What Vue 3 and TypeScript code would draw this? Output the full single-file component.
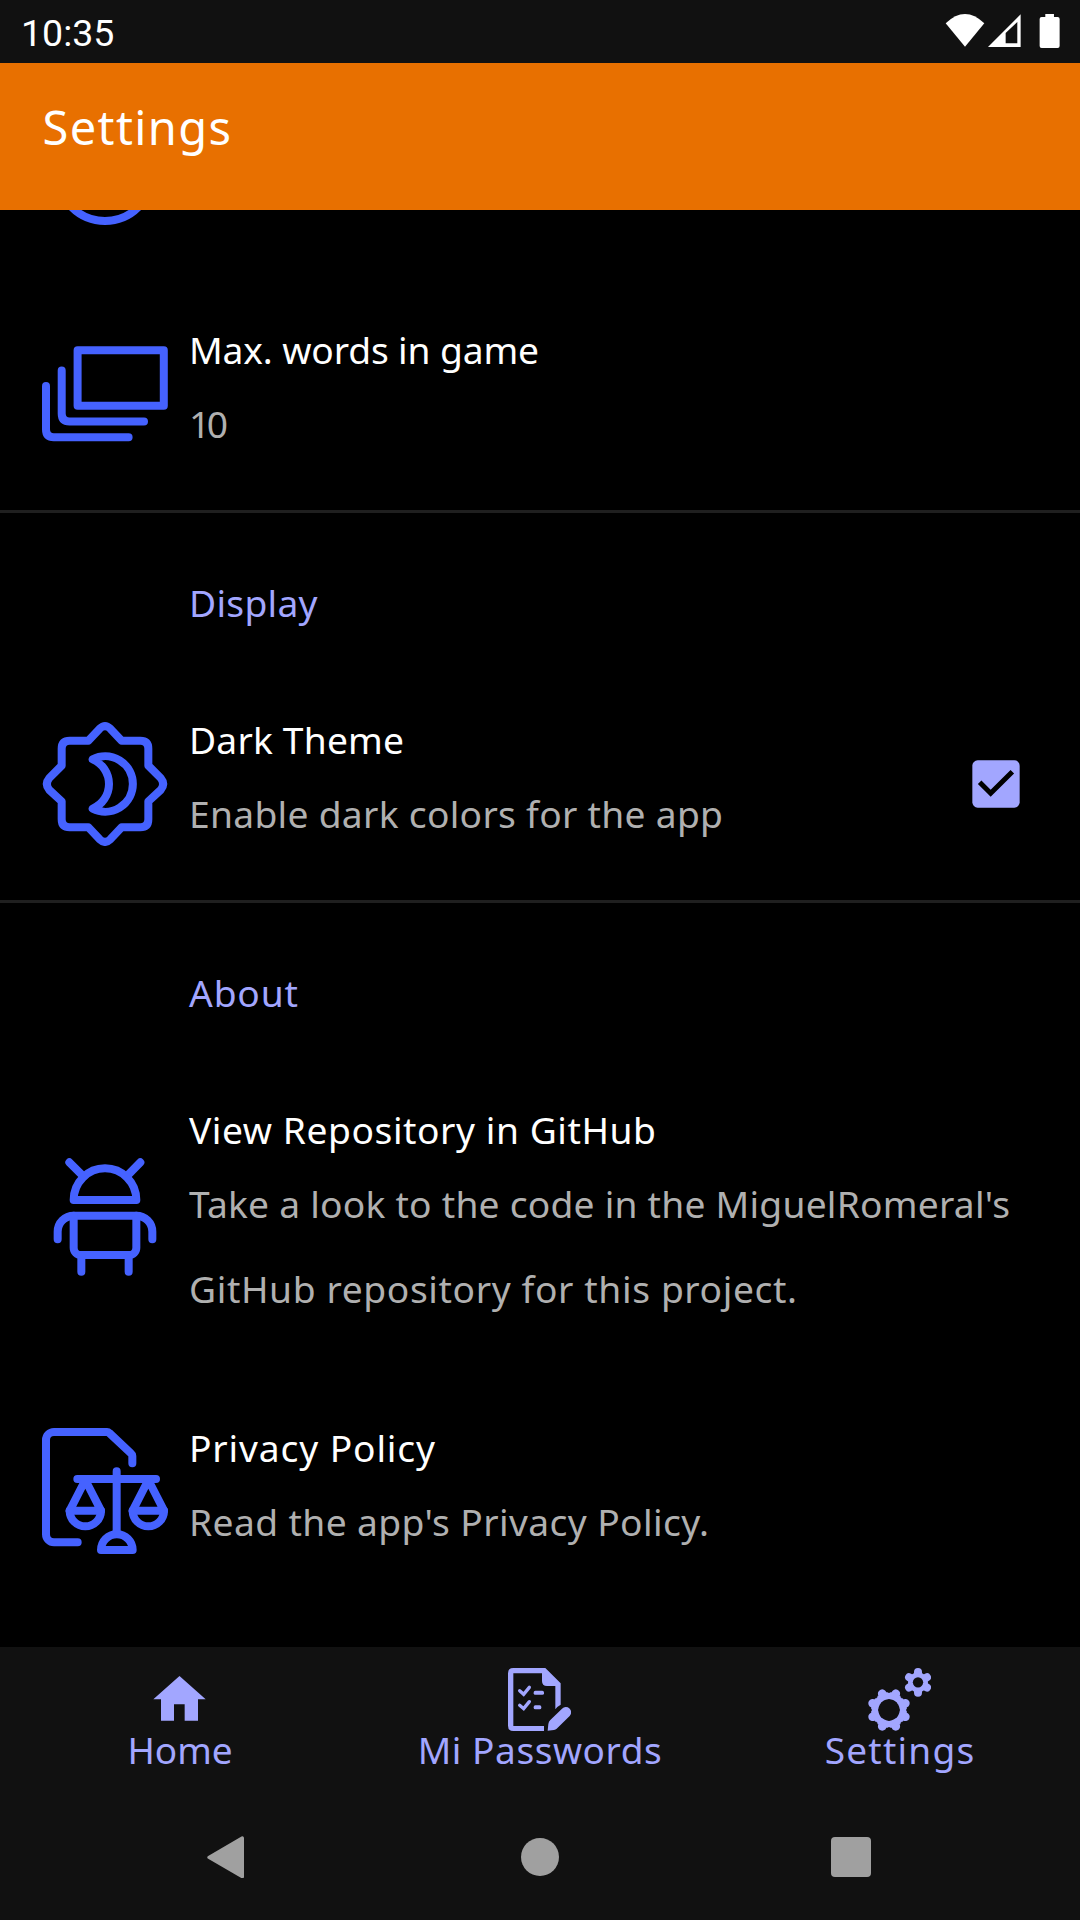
<script setup lang="ts">
interface Label {
  text: string
  width: number
}

const FAMILY = '"Noto Sans", "Open Sans", sans-serif'
const pen = document.createElement('canvas').getContext('2d')!

// Tracking that makes a label span the given width.
function track(label: Label, size = 37.2) {
  pen.font = `${size}px ${FAMILY}`
  const natural = pen.measureText(label.text).width
  const spacing = (label.width - natural) / (label.text.length - 1)
  return { letterSpacing: `${spacing.toFixed(3)}px` }
}

const appTitle: Label = { text: 'Settings', width: 188.5 }
const display: Label = { text: 'Display', width: 128.5 }
const about: Label = { text: 'About', width: 109 }

const words = {
  title: { text: 'Max. words in game', width: 350 },
  lines: [{ text: '10', width: 39 }],
}
const theme = {
  title: { text: 'Dark Theme', width: 215 },
  lines: [{ text: 'Enable dark colors for the app', width: 534 }],
}
const repository = {
  title: { text: 'View Repository in GitHub', width: 467 },
  lines: [
    { text: "Take a look to the code in the MiguelRomeral's", width: 821 },
    { text: 'GitHub repository for this project.', width: 608 },
  ],
}
const privacy = {
  title: { text: 'Privacy Policy', width: 246 },
  lines: [{ text: "Read the app's Privacy Policy.", width: 520 }],
}

const tabHome: Label = { text: 'Home', width: 105 }
const tabPasswords: Label = { text: 'Mi Passwords', width: 244 }
const tabSettings: Label = { text: 'Settings', width: 149.5 }

function teeth(cx: number, cy: number, count: number, from: number, to: number, start: number) {
  return Array.from({ length: count }, (_, i) => {
    const a = ((start + (360 / count) * i) * Math.PI) / 180
    const at = (r: number) => `${(cx + r * Math.cos(a)).toFixed(2)} ${(cy + r * Math.sin(a)).toFixed(2)}`
    return `M${at(from)}L${at(to)}`
  }).join('')
}
const bigTeeth = teeth(327, 210, 8, 40, 53, 22.5)
const bigTeethBase = teeth(327, 210, 8, 40, 52, 22.5)
const smallTeeth = teeth(414, 127, 6, 22, 31, 30)
</script>

<template>
  <div class="screen">
    <div class="status">
      <span class="clock">10:35</span>
      <svg class="status-icons" viewBox="130 36 352 114">
        <path d="M135 70Q193 14 251 70L193 140Z" />
        <path fill-rule="evenodd" d="M262 141L360 43V141ZM315 99V130H350V66Z" />
        <path d="M434 42H460V51H471Q477 51 477 57V138Q477 144 471 144H423Q417 144 417 138V57Q417 51 423 51H434Z" />
      </svg>
    </div>

    <header class="app-bar">
      <h1 :style="track(appTitle, 47)">{{ appTitle.text }}</h1>
    </header>

    <main class="list">
      <div class="row row-clipped">
        <svg class="icon" viewBox="42 111 126 126"><circle cx="105" cy="174" r="47" /></svg>
      </div>

      <section class="row">
        <svg class="icon" viewBox="42 330 126 126">
          <path d="M77.6 350.3H163.8V405.7H77.6Z" />
          <path d="M61.7 370.5V413.5Q61.7 421.5 69.5 421.5H144" />
          <path d="M46 386V429.3Q46 437.3 53.8 437.3H128.6" />
        </svg>
        <div class="copy">
          <h2 :style="track(words.title)">{{ words.title.text }}</h2>
          <p v-for="l in words.lines" :key="l.text" :style="track(l)">{{ l.text }}</p>
        </div>
      </section>

      <h3 class="category"><span :style="track(display)">{{ display.text }}</span></h3>

      <section class="row">
        <svg class="icon icon-fine" viewBox="66 60 378 378">
          <path d="M205 122L239 86Q255 71 271 86L305 122H361Q385 122 385 146V197L422 234Q437 252 422 270L385 304V358Q385 382 361 382H305L271 418Q255 433 239 418L205 382H149Q125 382 125 358V304L88 270Q73 252 88 234L125 197V146Q125 122 149 122Z" />
          <path d="M218 178A83 83 0 1 1 218 326A80.4 80.4 0 0 0 218 178Z" />
        </svg>
        <div class="copy">
          <h2 :style="track(theme.title)">{{ theme.title.text }}</h2>
          <p v-for="l in theme.lines" :key="l.text" :style="track(l)">{{ l.text }}</p>
        </div>
        <svg class="checkbox" viewBox="96 90 144 144">
          <rect x="97" y="91" width="142" height="142" rx="16" />
          <path d="M119 157L152 190L217 125" />
        </svg>
      </section>

      <h3 class="category"><span :style="track(about)">{{ about.text }}</span></h3>

      <section class="row row-tall">
        <svg class="icon icon-fine" viewBox="66 66 378 378">
          <path d="M148 94L188 134M361 94L322 134" />
          <path d="M161 207A94 95 0 0 1 349 207Z" />
          <path d="M113 325V302A48 48 0 0 1 161 254H349A48 48 0 0 1 397 302V325" />
          <path d="M161 254V350A22 22 0 0 0 183 372H327A22 22 0 0 0 349 350V254" />
          <path d="M184 372V422M326 372V422" />
        </svg>
        <div class="copy">
          <h2 :style="track(repository.title)">{{ repository.title.text }}</h2>
          <p v-for="l in repository.lines" :key="l.text" :style="track(l)">{{ l.text }}</p>
        </div>
      </section>

      <section class="row">
        <svg class="icon icon-fine" viewBox="66 84 378 378">
          <path d="M337 190V168Q337 163 333 160L268 99Q265 96 261 96H102A24 24 0 0 0 78 120V403A24 24 0 0 0 102 427H173" />
          <path d="M172 237H408M290 214V402" />
          <path d="M196 240L149 332H243Z" />
          <path d="M149 332A47 47 0 0 0 243 332" />
          <path d="M385 240L338 332H432Z" />
          <path d="M338 332A47 47 0 0 0 432 332" />
          <path d="M243 450A47 47 0 0 1 338 450Z" />
        </svg>
        <div class="copy">
          <h2 :style="track(privacy.title)">{{ privacy.title.text }}</h2>
          <p v-for="l in privacy.lines" :key="l.text" :style="track(l)">{{ l.text }}</p>
        </div>
      </section>
    </main>

    <nav class="tabs">
      <div class="tab">
        <svg class="tab-icon" viewBox="144 84 189 189">
          <path d="M238.500 108L317 178H294V242H254V193H222V242H183V178H160Z" />
        </svg>
        <span :style="track(tabHome, 37)">{{ tabHome.text }}</span>
      </div>
      <div class="tab">
        <svg class="tab-icon" viewBox="324 84 189 189">
          <path d="M340 84H436L482 130V194Q472 199 466 208V138H441Q426 138 426 123V100H340V258H432V273H340Q324 273 324 257V100Q324 84 340 84Z" />
          <path class="tick" d="M359 152L371 163L388 142M359 196L371 206L388 185" />
          <rect x="401" y="152.500" width="31" height="12" rx="5" />
          <rect x="401" y="196" width="23" height="12" rx="5" />
          <path d="M443 272L445 252Q446 245 451 240L486 206A15.500 15.500 0 0 1 509 228L470 266Q467 269 462 270Z" />
        </svg>
        <span :style="track(tabPasswords, 37)">{{ tabPasswords.text }}</span>
      </div>
      <div class="tab">
        <svg class="tab-icon" viewBox="264 84 189 189">
          <circle class="ring" cx="327" cy="210" r="42" stroke-width="20" />
          <path class="ring" :d="bigTeethBase" stroke-width="33" />
          <path class="ring" :d="bigTeeth" stroke-width="26" stroke-linecap="round" />
          <circle class="ring" cx="414" cy="127" r="22.500" stroke-width="15" />
          <path class="ring" :d="smallTeeth" stroke-width="24" stroke-linecap="round" />
          <circle class="hole" cx="327" cy="210" r="32" />
          <circle class="hole" cx="414" cy="127" r="15.500" />
        </svg>
        <span :style="track(tabSettings, 37)">{{ tabSettings.text }}</span>
      </div>
    </nav>

    <footer class="system">
      <svg class="back" viewBox="320 587 111 128">
        <path d="M326 651L426 593V709Z" />
      </svg>
      <i class="circle"></i>
      <i class="square"></i>
    </footer>
  </div>
</template>

<style>
body {
  margin: 0;
  background: #000;
}
</style>

<style scoped>
.screen {
  width: 1080px;
  height: 1920px;
  display: flex;
  flex-direction: column;
  overflow: hidden;
  background: #000;
  color: #fff;
  font-family: "Noto Sans", "Open Sans", sans-serif;
  font-size: 37.2px;
  white-space: nowrap;
}
h1, h2, h3, p {
  margin: 0;
  font-weight: 400;
}
svg {
  display: block;
  flex: none;
}
.status {
  height: 63px;
  flex: none;
  box-sizing: border-box;
  padding: 0 19px 0 21px;
  display: flex;
  align-items: flex-start;
  justify-content: space-between;
  background: #111;
}
.clock {
  font: 37.500px/67px Roboto, sans-serif;
}
.status-icons {
  width: 117.300px;
  height: 38px;
  margin-top: 12px;
  fill: #fff;
}
.app-bar {
  height: 147px;
  flex: none;
  box-sizing: border-box;
  padding: 33px 42.500px 0;
  background: #e87000;
}
.app-bar h1 {
  font-size: 47px;
  line-height: 62px;
}
.list {
  flex: 1;
  min-height: 0;
  overflow: hidden;
}
.row {
  display: flex;
  align-items: center;
  padding: 42px 60px 44px 42px;
}
.row-tall {
  padding-bottom: 43px;
}
.row-clipped {
  height: 66px;
  padding-top: 0;
  padding-bottom: 0;
  align-items: flex-end;
}
.row-clipped .icon {
  margin-bottom: 39px;
}
.row .icon {
  width: 126px;
  height: 126px;
  margin-right: 21px;
  position: relative;
  top: 1px;
  fill: none;
  stroke: #4562ff;
  stroke-width: 8;
  stroke-linecap: round;
  stroke-linejoin: round;
}
.row-clipped .icon {
  top: 0;
}
.row .icon-fine {
  stroke-width: 24;
}
.copy {
  flex: 1;
}
.copy h2 {
  font-size: 37.2px;
  line-height: 63px;
}
.copy p {
  line-height: 85px;
  color: #b0b0b0;
}
.checkbox {
  width: 48px;
  height: 48px;
  position: relative;
  top: 2px;
}
.checkbox rect {
  fill: #a2a6ff;
}
.checkbox path {
  fill: none;
  stroke: #000;
  stroke-width: 15;
}
.category {
  height: 156px;
  box-sizing: border-box;
  border-top: 3px solid #1f1f1f;
  padding: 58px 0 0 189px;
  font-size: 37.2px;
  line-height: 63px;
  color: #a2a6ff;
}
.tabs {
  height: 147px;
  flex: none;
  display: grid;
  grid-template-columns: repeat(3, 1fr);
  background: #111;
  color: #a2a6ff;
}
.tab {
  display: flex;
  flex-direction: column;
  align-items: center;
  padding-top: 21px;
  font-size: 37px;
  line-height: 37px;
}
.tab-icon {
  width: 63px;
  height: 63px;
  margin-right: 2px;
  fill: currentColor;
}
.tab .tick {
  fill: none;
  stroke: currentColor;
  stroke-width: 10;
  stroke-linecap: round;
}
.tab .ring {
  fill: none;
  stroke: currentColor;
}
.tab .hole {
  fill: #111;
}
.system {
  height: 126px;
  flex: none;
  display: flex;
  align-items: center;
  background: #111;
}
.back {
  width: 37px;
  height: 42.700px;
  margin-left: 206.700px;
  fill: #a0a0a0;
  stroke: #a0a0a0;
  stroke-width: 10;
  stroke-linejoin: round;
}
.circle {
  width: 38px;
  height: 38px;
  margin-left: 277.300px;
  border-radius: 50%;
  background: #a0a0a0;
}
.square {
  width: 40px;
  height: 40px;
  margin-left: 272px;
  border-radius: 4px;
  background: #a0a0a0;
}
</style>
